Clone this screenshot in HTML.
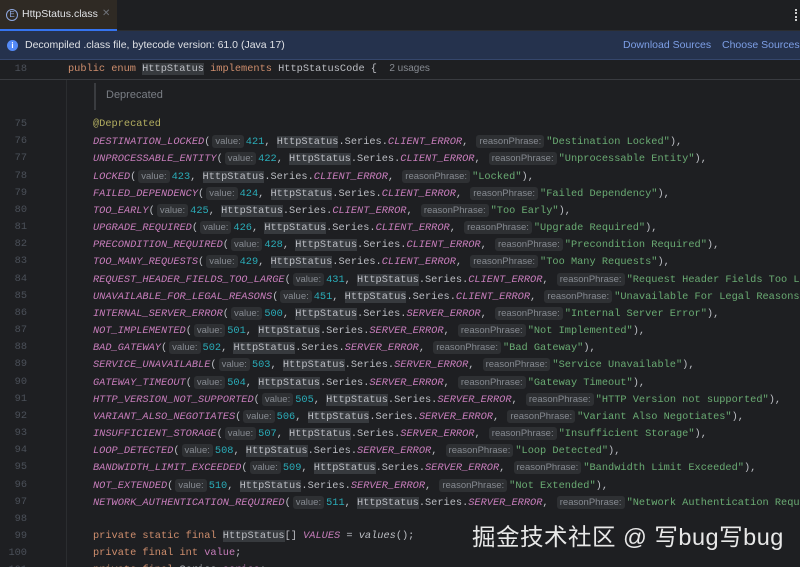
<!DOCTYPE html>
<html><head><meta charset="utf-8"><style>
*{margin:0;padding:0;box-sizing:border-box}
body{width:800px;height:567px;overflow:hidden;background:#1e1f22;font-family:"Liberation Mono",monospace;font-size:10.3px;color:#bcbec4;position:relative}
.tabbar{position:absolute;left:0;top:0;width:800px;height:31px;background:#1e1f22;border-bottom:1px solid #2b2d30}
.tab{position:absolute;left:0;top:0;width:117px;height:31px;background:#2f2a24;border-bottom:2px solid #3574f0;font-family:"Liberation Sans",sans-serif;font-size:10.5px;color:#dfe1e5;white-space:nowrap}
.tab .ic{position:absolute;left:6px;top:9px;width:12px;height:12px;border:1.3px solid #8fa8e0;border-radius:50%;font-size:8px;line-height:10px;text-align:center;color:#8fa8e0}
.tab .t{position:absolute;left:22px;top:8px}
.tab .x{position:absolute;left:102px;top:8px;color:#6f737a;font-size:10px}
.dots{position:absolute;left:795px;top:9px;width:2px;height:12px;border-left:2px dotted #ccc}
.info{position:absolute;left:0;top:31px;width:800px;height:29px;background:#25324d;border-bottom:1px solid #35466b;font-family:"Liberation Sans",sans-serif;font-size:10.5px;color:#dfe1e5;white-space:nowrap;overflow:hidden}
.info .i{position:absolute;left:7px;top:9px;width:11px;height:11px;border-radius:50%;background:#548af7;color:#fff;font-size:8px;font-weight:bold;text-align:center;line-height:11px}
.info .m{position:absolute;left:25px;top:8px}
.info a{position:absolute;top:8px;color:#7d9fe6;text-decoration:none}
.sticky{position:absolute;left:0;top:60px;width:800px;height:20px;background:#1e1f22;border-bottom:1px solid #393b40;white-space:pre}
.ln{position:absolute;left:0;width:27px;text-align:right;color:#4b5059}
.gut{position:absolute;left:66px;top:80px;width:1px;height:487px;background:#2b2d30}
.doc{position:absolute;left:94px;top:83px;width:2px;height:27px;background:#3a3c40}
.doct{position:absolute;left:106px;top:89px;font-family:"Liberation Sans",sans-serif;font-size:11px;color:#7a7e85}
.code{position:absolute;left:0;top:116px;width:800px;overflow:hidden;height:451px}
.r{position:relative;height:17.18px;line-height:17.18px;white-space:pre}
.r .n{position:absolute;left:0;width:27px;text-align:right;color:#4b5059}
.r .c{position:absolute;left:93px}
.k{color:#cf8e6d}.e{color:#c77dbb;font-style:italic}.d{color:#2aacb8}.s{color:#6aab73}.a{color:#b3ae60}
.hl{background:#373a3e}
.h{font-family:"Liberation Sans",sans-serif;font-size:9.5px;color:#868a91;background:#2e3033;border-radius:3px;padding:1px 3px;margin:0 2px 0 2px;font-style:normal}
.wm{position:absolute;left:472px;top:518px;font-family:"Liberation Sans","Noto Sans CJK SC",sans-serif;font-size:23.5px;color:#e8e8e8;letter-spacing:0.5px;white-space:nowrap}
</style></head><body>
<div class="tabbar"><div class="tab"><div class="ic">E</div><span class="t">HttpStatus.class</span><span class="x">✕</span></div><div class="dots"></div></div>
<div class="info"><div class="i">i</div><span class="m">Decompiled .class file, bytecode version: 61.0 (Java 17)</span><a style="left:623px">Download Sources</a><a style="left:722px">Choose Sources...</a></div>
<div class="sticky"><span class="ln" style="top:3px">18</span><span style="position:absolute;left:68px;top:3px;white-space:pre"><span class="k">public enum </span><span class="hl">HttpStatus</span><span class="k"> implements </span>HttpStatusCode {  <span style="font-family:'Liberation Sans',sans-serif;font-size:10px;color:#868a91">2 usages</span></span></div>
<div class="gut"></div><div class="doc"></div><div class="doct">Deprecated</div>
<div class="code">
<div class="r"><span class="n">75</span><span class="c"><span class="a">@Deprecated</span></span></div>
<div class="r"><span class="n">76</span><span class="c"><span class="e">DESTINATION_LOCKED</span>(<i class="h">value:</i><span class="d">421</span>, <span class="hl">HttpStatus</span>.Series.<span class="e">CLIENT_ERROR</span>, <i class="h">reasonPhrase:</i><span class="s">"Destination Locked"</span>),</span></div>
<div class="r"><span class="n">77</span><span class="c"><span class="e">UNPROCESSABLE_ENTITY</span>(<i class="h">value:</i><span class="d">422</span>, <span class="hl">HttpStatus</span>.Series.<span class="e">CLIENT_ERROR</span>, <i class="h">reasonPhrase:</i><span class="s">"Unprocessable Entity"</span>),</span></div>
<div class="r"><span class="n">78</span><span class="c"><span class="e">LOCKED</span>(<i class="h">value:</i><span class="d">423</span>, <span class="hl">HttpStatus</span>.Series.<span class="e">CLIENT_ERROR</span>, <i class="h">reasonPhrase:</i><span class="s">"Locked"</span>),</span></div>
<div class="r"><span class="n">79</span><span class="c"><span class="e">FAILED_DEPENDENCY</span>(<i class="h">value:</i><span class="d">424</span>, <span class="hl">HttpStatus</span>.Series.<span class="e">CLIENT_ERROR</span>, <i class="h">reasonPhrase:</i><span class="s">"Failed Dependency"</span>),</span></div>
<div class="r"><span class="n">80</span><span class="c"><span class="e">TOO_EARLY</span>(<i class="h">value:</i><span class="d">425</span>, <span class="hl">HttpStatus</span>.Series.<span class="e">CLIENT_ERROR</span>, <i class="h">reasonPhrase:</i><span class="s">"Too Early"</span>),</span></div>
<div class="r"><span class="n">81</span><span class="c"><span class="e">UPGRADE_REQUIRED</span>(<i class="h">value:</i><span class="d">426</span>, <span class="hl">HttpStatus</span>.Series.<span class="e">CLIENT_ERROR</span>, <i class="h">reasonPhrase:</i><span class="s">"Upgrade Required"</span>),</span></div>
<div class="r"><span class="n">82</span><span class="c"><span class="e">PRECONDITION_REQUIRED</span>(<i class="h">value:</i><span class="d">428</span>, <span class="hl">HttpStatus</span>.Series.<span class="e">CLIENT_ERROR</span>, <i class="h">reasonPhrase:</i><span class="s">"Precondition Required"</span>),</span></div>
<div class="r"><span class="n">83</span><span class="c"><span class="e">TOO_MANY_REQUESTS</span>(<i class="h">value:</i><span class="d">429</span>, <span class="hl">HttpStatus</span>.Series.<span class="e">CLIENT_ERROR</span>, <i class="h">reasonPhrase:</i><span class="s">"Too Many Requests"</span>),</span></div>
<div class="r"><span class="n">84</span><span class="c"><span class="e">REQUEST_HEADER_FIELDS_TOO_LARGE</span>(<i class="h">value:</i><span class="d">431</span>, <span class="hl">HttpStatus</span>.Series.<span class="e">CLIENT_ERROR</span>, <i class="h">reasonPhrase:</i><span class="s">"Request Header Fields Too Large"</span>),</span></div>
<div class="r"><span class="n">85</span><span class="c"><span class="e">UNAVAILABLE_FOR_LEGAL_REASONS</span>(<i class="h">value:</i><span class="d">451</span>, <span class="hl">HttpStatus</span>.Series.<span class="e">CLIENT_ERROR</span>, <i class="h">reasonPhrase:</i><span class="s">"Unavailable For Legal Reasons"</span>),</span></div>
<div class="r"><span class="n">86</span><span class="c"><span class="e">INTERNAL_SERVER_ERROR</span>(<i class="h">value:</i><span class="d">500</span>, <span class="hl">HttpStatus</span>.Series.<span class="e">SERVER_ERROR</span>, <i class="h">reasonPhrase:</i><span class="s">"Internal Server Error"</span>),</span></div>
<div class="r"><span class="n">87</span><span class="c"><span class="e">NOT_IMPLEMENTED</span>(<i class="h">value:</i><span class="d">501</span>, <span class="hl">HttpStatus</span>.Series.<span class="e">SERVER_ERROR</span>, <i class="h">reasonPhrase:</i><span class="s">"Not Implemented"</span>),</span></div>
<div class="r"><span class="n">88</span><span class="c"><span class="e">BAD_GATEWAY</span>(<i class="h">value:</i><span class="d">502</span>, <span class="hl">HttpStatus</span>.Series.<span class="e">SERVER_ERROR</span>, <i class="h">reasonPhrase:</i><span class="s">"Bad Gateway"</span>),</span></div>
<div class="r"><span class="n">89</span><span class="c"><span class="e">SERVICE_UNAVAILABLE</span>(<i class="h">value:</i><span class="d">503</span>, <span class="hl">HttpStatus</span>.Series.<span class="e">SERVER_ERROR</span>, <i class="h">reasonPhrase:</i><span class="s">"Service Unavailable"</span>),</span></div>
<div class="r"><span class="n">90</span><span class="c"><span class="e">GATEWAY_TIMEOUT</span>(<i class="h">value:</i><span class="d">504</span>, <span class="hl">HttpStatus</span>.Series.<span class="e">SERVER_ERROR</span>, <i class="h">reasonPhrase:</i><span class="s">"Gateway Timeout"</span>),</span></div>
<div class="r"><span class="n">91</span><span class="c"><span class="e">HTTP_VERSION_NOT_SUPPORTED</span>(<i class="h">value:</i><span class="d">505</span>, <span class="hl">HttpStatus</span>.Series.<span class="e">SERVER_ERROR</span>, <i class="h">reasonPhrase:</i><span class="s">"HTTP Version not supported"</span>),</span></div>
<div class="r"><span class="n">92</span><span class="c"><span class="e">VARIANT_ALSO_NEGOTIATES</span>(<i class="h">value:</i><span class="d">506</span>, <span class="hl">HttpStatus</span>.Series.<span class="e">SERVER_ERROR</span>, <i class="h">reasonPhrase:</i><span class="s">"Variant Also Negotiates"</span>),</span></div>
<div class="r"><span class="n">93</span><span class="c"><span class="e">INSUFFICIENT_STORAGE</span>(<i class="h">value:</i><span class="d">507</span>, <span class="hl">HttpStatus</span>.Series.<span class="e">SERVER_ERROR</span>, <i class="h">reasonPhrase:</i><span class="s">"Insufficient Storage"</span>),</span></div>
<div class="r"><span class="n">94</span><span class="c"><span class="e">LOOP_DETECTED</span>(<i class="h">value:</i><span class="d">508</span>, <span class="hl">HttpStatus</span>.Series.<span class="e">SERVER_ERROR</span>, <i class="h">reasonPhrase:</i><span class="s">"Loop Detected"</span>),</span></div>
<div class="r"><span class="n">95</span><span class="c"><span class="e">BANDWIDTH_LIMIT_EXCEEDED</span>(<i class="h">value:</i><span class="d">509</span>, <span class="hl">HttpStatus</span>.Series.<span class="e">SERVER_ERROR</span>, <i class="h">reasonPhrase:</i><span class="s">"Bandwidth Limit Exceeded"</span>),</span></div>
<div class="r"><span class="n">96</span><span class="c"><span class="e">NOT_EXTENDED</span>(<i class="h">value:</i><span class="d">510</span>, <span class="hl">HttpStatus</span>.Series.<span class="e">SERVER_ERROR</span>, <i class="h">reasonPhrase:</i><span class="s">"Not Extended"</span>),</span></div>
<div class="r"><span class="n">97</span><span class="c"><span class="e">NETWORK_AUTHENTICATION_REQUIRED</span>(<i class="h">value:</i><span class="d">511</span>, <span class="hl">HttpStatus</span>.Series.<span class="e">SERVER_ERROR</span>, <i class="h">reasonPhrase:</i><span class="s">"Network Authentication Required"</span>);</span></div>
<div class="r"><span class="n">98</span></div>
<div class="r"><span class="n">99</span><span class="c"><span class="k">private static final </span><span class="hl">HttpStatus</span>[] <span class="e">VALUES</span> = <i>values</i>();</span></div>
<div class="r"><span class="n">100</span><span class="c"><span class="k">private final int </span><span style="color:#c77dbb">value</span>;</span></div>
<div class="r"><span class="n">101</span><span class="c"><span class="k">private final </span>Series <span style="color:#c77dbb">series</span>;</span></div>
</div>
<div class="wm">掘金技术社区 @ 写bug写bug</div>
</body></html>
